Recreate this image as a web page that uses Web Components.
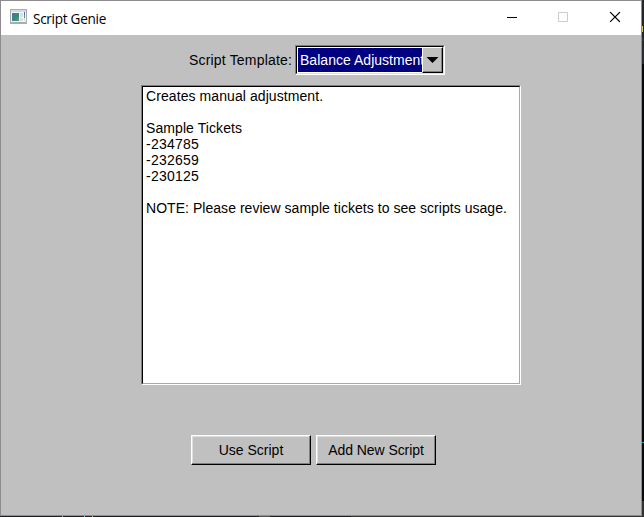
<!DOCTYPE html>
<html lang="en">
<head>
<meta charset="utf-8">
<title>Script Genie</title>
<style>
html,body{margin:0;height:100%;overflow:hidden}
body{font:14px/16px "Liberation Sans",Arial,sans-serif;color:#000}
.num{letter-spacing:.22px}
.head{letter-spacing:.08px}
</style>
</head>
<body>
<genie-desktop>
  <genie-window caption="Script Genie">
    <genie-field label="Script Template:"><genie-combo>Balance Adjustment</genie-combo></genie-field>
    <genie-text><span class="head">Creates manual adjustment.</span>

<span class="head">Sample Tickets</span>
<span class="num">-234785
-232659
-230125</span>

NOTE: Please review sample tickets to see scripts usage.</genie-text>
    <genie-button slot="actions">Use Script</genie-button>
    <genie-button slot="actions" style="--ls:-0.06px">Add New Script</genie-button>
  </genie-window>
</genie-desktop>
<script>
function define(name, html) {
  customElements.define(name, class extends HTMLElement {
    constructor() {
      super();
      const root = this.attachShadow({ mode: "open" });
      root.innerHTML = html;
    }
    connectedCallback() {
      for (const n of this.shadowRoot.querySelectorAll("[data-attr]"))
        n.textContent = this.getAttribute(n.dataset.attr);
    }
  });
}

define("genie-desktop", `<style>
:host{display:block;box-sizing:border-box;width:644px;height:517px;padding:0 2px 1px 0;
background:
 linear-gradient(#d8b860,#d8b860) 642px 26px/1px 6px no-repeat,
 linear-gradient(#26a69a,#26a69a) 642px 442px/2px 1px no-repeat,
 linear-gradient(#aaa,#aaa) 62px 516px/1px 1px no-repeat,
 linear-gradient(#8cc,#8cc) 84px 516px/1px 1px no-repeat,
 linear-gradient(#bba,#bba) 92px 516px/1px 1px no-repeat,
 linear-gradient(#555,#555) 259px 516px/11px 1px no-repeat,
 linear-gradient(#333,#333) 351px 516px/293px 1px no-repeat,
 linear-gradient(#1e1e20,#1e1e20) 0 516px/351px 1px no-repeat,
 linear-gradient(#25262a 0 38px,#34353a 38px 41px,#292a2f 41px 64px,#08090a 64px 501px,#333 501px) 642px 0/2px 517px no-repeat,#111}
</style><slot></slot>`);

define("genie-window", `<style>
:host{display:flex;flex-direction:column;box-sizing:border-box;height:516px;border:1px solid #8e8c8e;background:#c0c0c0}
header{display:flex;align-items:center;height:34px;background:#fff}
.app{margin:-3px 6px 0 9px;flex:none}
h1{flex:1;margin:0;padding-top:1px;font:400 13.6px/20px "Open Sans","Noto Sans",sans-serif;letter-spacing:-.3px}
.ctl{flex:none;margin-right:1px}
main{display:flex;flex-direction:column;align-items:flex-start;padding:10px 0 0 140px}
footer{display:flex;gap:5px;padding:50px 0 0 190px}
</style>
<header>
<svg class="app" width="17" height="15" viewBox="0 0 17 15" shape-rendering="crispEdges">
<defs><linearGradient id="g" x1="0" y1="0" x2="1" y2="1"><stop stop-color="#4878a8"/><stop offset=".55" stop-color="#398b78"/><stop offset="1" stop-color="#4fa878"/></linearGradient></defs>
<path fill="#a9adb3" d="M0 0h17v15H0z"/><path fill="#d5dae2" d="M1 1h15v2H1z"/><path fill="#f4f5f6" d="M1 3h15v10H1z"/>
<path fill="url(#g)" d="M2 4h7v8H2z"/><path fill="#dcdde0" d="M10 4h3v4h-3zM10 9h3v3h-3z"/><path fill="#4a70b0" d="M14 3h1v3h-1z"/><path fill="#48a080" d="M14 6h1v3h-1z"/>
<path fill="#dadada" d="M14 9h1v3h-1z"/></svg>
<h1 data-attr="caption"></h1>
<svg class="ctl" width="138" height="34" viewBox="0 0 138 34">
<path d="M5 16.5h10" stroke="#000"/><path d="M56.5 11.5h9v9h-9z" fill="none" stroke="#ccc"/>
<path d="M108.5 11.5l9 9m0-9l-9 9" stroke="#000" stroke-width="1.1" stroke-linecap="square"/></svg>
</header>
<main><slot></slot></main>
<footer><slot name="actions"></slot></footer>`);

define("genie-field", `<style>
:host{display:flex;align-items:center;margin:0 0 10px 48px;height:30px}
label{width:106px;letter-spacing:.18px;white-space:nowrap}
</style><label data-attr="label"></label><slot></slot>`);

define("genie-combo", `<style>
:host{display:flex;box-sizing:border-box;width:150px;height:30px;border:1px solid;border-color:#808080 #fff #fff #808080;background:#fff}
.in{display:flex;flex:1;min-width:0;border:1px solid;border-color:#000 #dfdfdf #dfdfdf #000}
.v{flex:1;min-width:0;margin:1px 0 1px 1px;padding-left:2px;overflow:hidden;white-space:nowrap;background:#000080;color:#fff;line-height:24px;letter-spacing:.03px}
.b{box-sizing:border-box;width:21px;flex:none;border:1px solid;border-color:#fff #000 #000 #fff;box-shadow:inset -1px -1px #808080;background:#c0c0c0}
svg{display:block}
</style><div class="in"><div class="v"><slot></slot></div><div class="b"><svg width="19" height="24"><path d="M3.5 9h12l-6 6z"/></svg></div></div>`);

define("genie-text", `<style>
:host{display:block;box-sizing:border-box;width:380px;height:300px;border:1px solid;border-color:#808080 #fff #fff #808080}
.t{box-sizing:border-box;height:100%;border:1px solid;border-color:#000 #a8a8a8 #a8a8a8 #000;background:#fff;padding:1px 3px;white-space:pre;letter-spacing:.04px}
</style><div class="t"><slot></slot></div>`);

define("genie-button", `<style>
:host{display:block;box-sizing:border-box;width:120px;height:30px;border:1px solid;border-color:#fff #000 #000 #fff;box-shadow:inset -1px -1px #808080,inset 1px 1px #dfdfdf;text-align:center;line-height:28px;letter-spacing:var(--ls,0)}
</style><slot></slot>`);
</script>
</body>
</html>
